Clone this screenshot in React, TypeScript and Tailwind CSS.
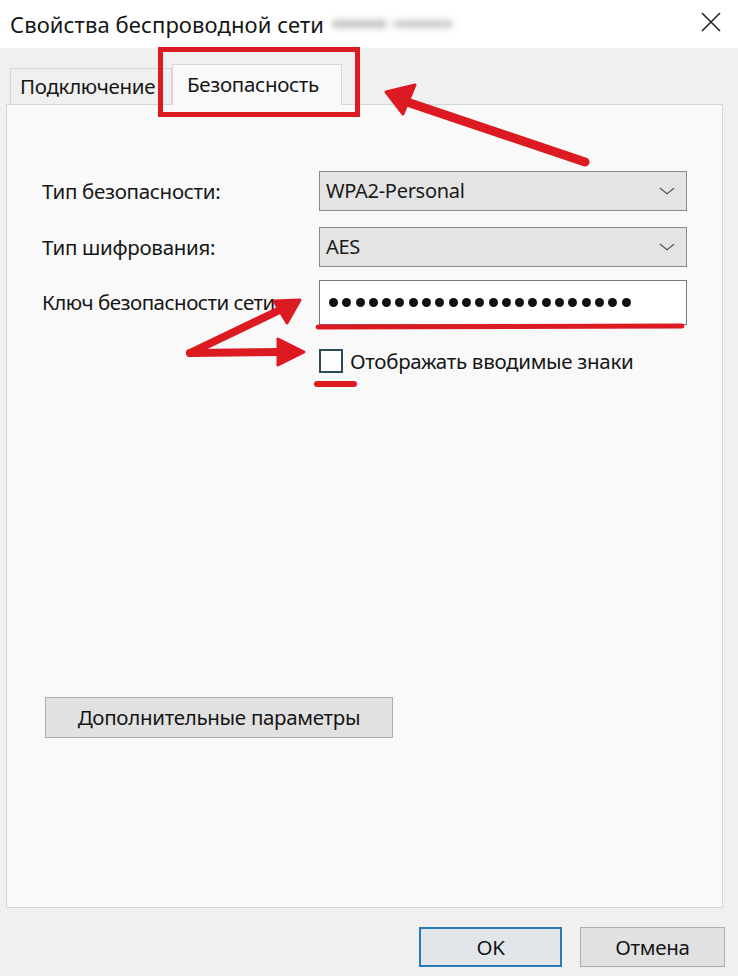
import { ChevronDown } from 'lucide-react';

const RED = '#dc1a21';

const Select = ({ value }: { value: string }) => (
  <div className="flex items-center justify-between h-[40px] w-[368px] border border-[#8a8a8a] bg-[#e4e4e4] pl-[6px] pr-[8px]">
    <span className="text-[20px] tracking-[-0.3px] text-[#1a1a1a]">{value}</span>
    <ChevronDown size={22} strokeWidth={1.1} className="text-[#333] scale-x-125" />
  </div>
);

const Arrows = () => (
  <svg className="absolute inset-0 pointer-events-none" width="738" height="976" viewBox="0 0 738 976">
    <g stroke={RED} strokeLinecap="round" strokeLinejoin="round" fill={RED}>
      {/* arrow to tab */}
      <line x1="585" y1="162" x2="404" y2="101" strokeWidth="9" />
      <polygon points="386,92 415,85 403,114" strokeWidth="3" />
      {/* arrow to key label */}
      <line x1="190" y1="353" x2="286" y2="307" strokeWidth="8" />
      <polygon points="300,300 274,301 287,323" strokeWidth="3" />
      {/* arrow to checkbox */}
      <line x1="190" y1="353" x2="282" y2="352" strokeWidth="8" />
      <polygon points="304,352 278,339 278,365" strokeWidth="3" />
      {/* underlines */}
      <line x1="318" y1="327" x2="682" y2="326" strokeWidth="5" />
      <line x1="317" y1="384" x2="354" y2="384" strokeWidth="6" />
    </g>
  </svg>
);

const App = () => {
  const dots = Array.from({ length: 23 });
  return (
    <div className="relative w-[738px] h-[976px] bg-[#f0f0f0] flex flex-col overflow-hidden text-[#161616] [font-family:'Noto_Sans',sans-serif]">
      {/* title bar */}
      <div className="h-[48px] bg-white flex items-center justify-between pl-[10px] pr-[16px]">
        <div className="flex items-center gap-[8px]">
          <span className="text-[22px] tracking-[0.1px]">Свойства беспроводной сети</span>
          <div className="flex items-center gap-[6px] blur-[3px] opacity-60">
            <div className="h-[8px] w-[55px] rounded bg-[#9a9a9a]" />
            <div className="h-[8px] w-[60px] rounded bg-[#aaaaaa]" />
          </div>
        </div>
        <svg width="22" height="22" viewBox="0 0 22 22" className="mt-[-4px]">
          <path d="M2 2L20 20M20 2L2 20" stroke="#222" strokeWidth="1.6" />
        </svg>
      </div>

      {/* tabs */}
      <div className="h-[56px] flex items-end pl-[10px]">
        <div className="h-[36px] w-[162px] border border-b-0 border-[#d6d6d6] bg-[#f0f0f0] pl-[9px] flex items-center overflow-hidden whitespace-nowrap text-[20.5px] tracking-[-0.3px]">
          Подключение
        </div>
        <div className="relative z-10 -mb-px h-[41px] w-[170px] border border-b-0 border-[#d6d6d6] bg-[#f9f9f9] pl-[14px] flex items-start pt-[4px] text-[20.5px] tracking-[-0.3px]">
          Безопасность
        </div>
      </div>

      {/* panel */}
      <div className="ml-[6px] w-[717px] h-[804px] border border-[#d6d6d6] bg-[#f9f9f9] pt-[66px] pl-[35px] flex flex-col text-[20.5px] tracking-[-0.3px]">
        <div className="flex items-center">
          <span className="w-[277px]">Тип безопасности:</span>
          <Select value="WPA2-Personal" />
        </div>
        <div className="flex items-center mt-[16px]">
          <span className="w-[277px]">Тип шифрования:</span>
          <Select value="AES" />
        </div>
        <div className="flex items-center mt-[13px]">
          <span className="w-[277px] whitespace-nowrap tracking-[-0.5px]">Ключ безопасности сети</span>
          <div className="h-[45px] w-[368px] border border-[#7a7a7a] bg-white flex items-center gap-[4.3px] pl-[9px]">
            {dots.map((_, i) => (
              <div key={i} className="w-[9px] h-[9px] rounded-full bg-[#111]" />
            ))}
          </div>
        </div>
        <div className="flex items-center mt-[21px] pl-[277px]">
          <div className="w-[24px] h-[24px] border-2 border-[#2a4b57] bg-white" />
          <span className="ml-[7px]">Отображать вводимые знаки</span>
        </div>

        <button className="mt-[320px] w-[348px] h-[41px] ml-[3px] border border-[#adadad] bg-[#e1e1e1] text-[#161616]">
          Дополнительные параметры
        </button>
      </div>

      {/* footer */}
      <div className="flex justify-end gap-[18px] pr-[13px] pt-[19px] text-[20.5px] tracking-[-0.3px]">
        <button className="w-[143px] h-[40px] border-2 border-[#2a7ab8] bg-[#e2e6ea]">OK</button>
        <button className="w-[145px] h-[40px] border border-[#adadad] bg-[#e1e1e1]">Отмена</button>
      </div>

      {/* highlight on active tab */}
      <div className="absolute left-[158px] top-[47px] w-[202px] h-[70px] border-[5px] border-[#dc1a21]" />
      <Arrows />
    </div>
  );
};

export default App;
